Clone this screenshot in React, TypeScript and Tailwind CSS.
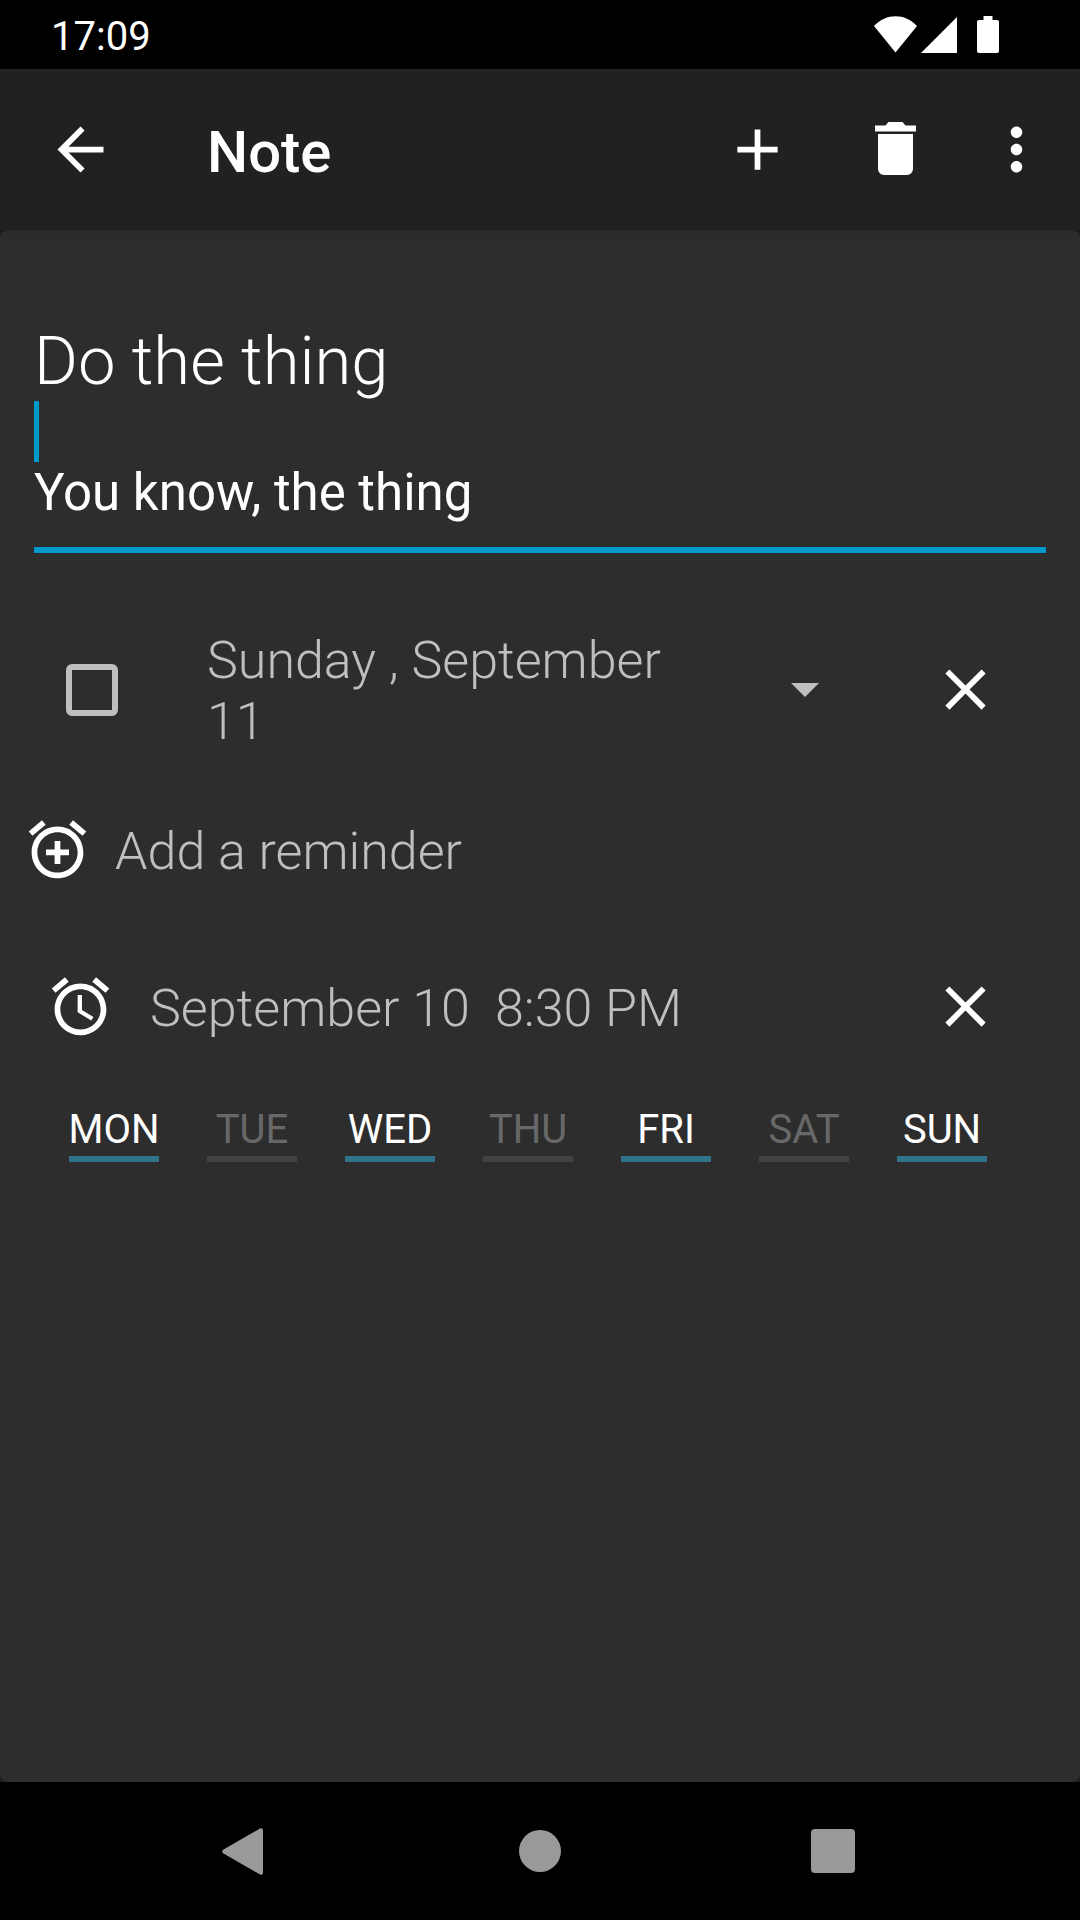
import React, { useState } from "react";

type Day = { label: string; name: string; on: boolean };

const DAYS: Day[] = [
  { label: "MON", name: "Monday", on: true },
  { label: "TUE", name: "Tuesday", on: false },
  { label: "WED", name: "Wednesday", on: true },
  { label: "THU", name: "Thursday", on: false },
  { label: "FRI", name: "Friday", on: true },
  { label: "SAT", name: "Saturday", on: false },
  { label: "SUN", name: "Sunday", on: true },
];

const DATES = ["Sunday , September 11", "Monday , September 12", "Tuesday , September 13"];

function Icon({ d, className = "size-[69px]" }: { d: string; className?: string }) {
  return (
    <svg viewBox="0 0 24 24" fill="currentColor" aria-hidden="true" className={className}>
      <path d={d} />
    </svg>
  );
}

const CLOSE =
  "M19 6.41 17.59 5 12 10.59 6.41 5 5 6.41 10.59 12 5 17.59 6.41 19 12 13.41 17.59 19 19 17.59 13.41 12z";
const BACK = "M20 11H7.83l5.59-5.59L12 4l-8 8 8 8 1.41-1.41L7.83 13H20v-2z";
const ADD = "M19 13h-6v6h-2v-6H5v-2h6V5h2v6h6v2z";
const ALARM =
  "M22 5.72l-4.6-3.86-1.29 1.53 4.6 3.86L22 5.72zM7.88 3.39L6.6 1.86 2 5.71l1.29 1.53 4.59-3.85zM12.5 8H11v6l4.75 2.85.75-1.23-4-2.37V8zM12 4c-4.97 0-9 4.03-9 9s4.02 9 9 9c4.97 0 9-4.03 9-9s-4.03-9-9-9zm0 16c-3.87 0-7-3.13-7-7s3.13-7 7-7 7 3.13 7 7-3.13 7-7 7z";
const ADD_ALARM =
  "M7.88 3.39L6.6 1.86 2 5.71l1.29 1.53 4.59-3.85zM22 5.72l-4.6-3.86-1.29 1.53 4.6 3.86L22 5.72zM12 4c-4.97 0-9 4.03-9 9s4.02 9 9 9c4.97 0 9-4.03 9-9s-4.03-9-9-9zm0 16c-3.87 0-7-3.13-7-7s3.13-7 7-7 7 3.13 7 7-3.13 7-7 7zm1-11h-2v3H8v2h3v3h2v-3h3v-2h-3V9z";

function StatusBar() {
  return (
    <header className="flex h-[69px] items-center bg-black pr-[81px] pl-[51px]">
      <time className="flex-1 pt-1 text-[40px] leading-[47px]">17:09</time>
      <svg viewBox="0 0 43 37" fill="currentColor" aria-hidden="true" className="mr-1 h-[37px] w-[43px]">
        <path d="M0 10C12 -3 31 -3 43 10L21.500 36.500Z" />
      </svg>
      <svg viewBox="0 0 36 37" fill="currentColor" aria-hidden="true" className="mr-5 h-[37px] w-9">
        <path d="M36 1v36H0Z" />
      </svg>
      <svg viewBox="0 0 22 37" fill="currentColor" aria-hidden="true" className="h-[37px] w-[22px]">
        <path d="M6.500 0h9v4H20a2 2 0 0 1 2 2v29a2 2 0 0 1-2 2H2a2 2 0 0 1-2-2V6a2 2 0 0 1 2-2h4.500Z" />
      </svg>
    </header>
  );
}

function Toolbar() {
  return (
    <div className="flex h-[161px] items-center bg-[#212121] pr-3">
      <button type="button" aria-label="Back" className="flex size-[161px] items-center justify-center">
        <Icon d={BACK} />
      </button>
      <h1 className="ml-[46px] flex-1 pt-1 text-[58px] leading-[68px] font-medium">Note</h1>
      <button type="button" aria-label="Add" className="flex size-[138px] items-center justify-center">
        <Icon d={ADD} />
      </button>
      <button type="button" aria-label="Delete" className="flex size-[138px] items-center justify-center">
        <svg viewBox="0 0 41 53" fill="currentColor" aria-hidden="true" className="mb-0.5 h-[53px] w-[41px]">
          <path d="M0 3.500h10.500L13.500 0h14l3 3.500H41V9.500H0ZM3 12h35v35a6 6 0 0 1-6 6H9a6 6 0 0 1-6-6Z" />
        </svg>
      </button>
      <button type="button" aria-label="More options" className="flex h-[138px] w-[104px] items-center justify-center">
        <Icon d="M12 8c1.100 0 2-.9 2-2s-.9-2-2-2-2 .9-2 2 .9 2 2 2zm0 2c-1.100 0-2 .9-2 2s.9 2 2 2 2-.9 2-2-.9-2-2-2zm0 6c-1.100 0-2 .9-2 2s.9 2 2 2 2-.9 2-2-.9-2-2-2z" />
      </button>
    </div>
  );
}

function DayToggle({ day }: { day: Day }) {
  const [on, setOn] = useState(day.on);
  return (
    <button
      type="button"
      aria-pressed={on}
      aria-label={day.name}
      onClick={() => setOn(!on)}
      className={
        on
          ? "flex w-[138px] flex-col items-center text-[40px] leading-[47px] text-white"
          : "flex w-[138px] flex-col items-center text-[40px] leading-[47px] text-[#686868]"
      }
    >
      {day.label}
      <span className={on ? "mt-[3px] h-1.5 w-[90px] bg-[#31718a]" : "mt-[3px] h-1.5 w-[90px] bg-[#424242]"} />
    </button>
  );
}

function Editor() {
  const [date, setDate] = useState(DATES[0]);
  return (
    <div className="flex flex-1 flex-col bg-[#1b1b1b]">
      <main className="flex flex-1 flex-col rounded-lg bg-[#2d2d2d]">
        <div className="h-3 rounded-t-lg bg-linear-to-b from-[#292929] to-[#2d2d2d]" />
        <div className="px-[34px] pt-20">
          <input
            type="text"
            aria-label="Title"
            defaultValue="Do the thing"
            className="block h-[79px] w-full bg-transparent text-[67px] leading-[79px] font-light outline-none"
          />
          <div className="relative border-b-[6px] border-[#0099cc] pb-6">
            <textarea
              aria-label="Note text"
              rows={2}
              defaultValue={"\nYou know, the thing"}
              className="block w-full resize-none overflow-hidden bg-transparent text-[51px] leading-[61px] caret-[#0099cc] outline-none"
            />
            <span className="absolute top-0 left-0 h-[61px] w-[5px] bg-[#0099cc]" />
          </div>
        </div>

        <div className="mt-[74px] flex items-center pr-[46px] pl-[66px] text-[52px] leading-[61px] font-light text-[#bfbfbf]">
          <input
            type="checkbox"
            aria-label="Done"
            className="size-[52px] shrink-0 appearance-none rounded-md border-[6px] border-[#bfbfbf] checked:bg-[#0099cc]"
          />
          <div className="relative ml-[89px] flex flex-1 items-center">
            <span className="flex-1 pt-[3px] pr-[90px]">{date}</span>
            <svg viewBox="0 0 28 14" fill="currentColor" aria-hidden="true" className="mr-[77px] h-3.5 w-7">
              <path d="M0 0h28L14 14Z" />
            </svg>
            <select
              aria-label="Date"
              value={date}
              onChange={(e) => setDate(e.target.value)}
              className="absolute inset-0 size-full opacity-0"
            >
              {DATES.map((d) => (
                <option key={d}>{d}</option>
              ))}
            </select>
          </div>
          <button type="button" aria-label="Remove date" className="flex w-[138px] justify-center text-white">
            <Icon d={CLOSE} />
          </button>
        </div>

        <button
          type="button"
          className="mt-[63px] flex items-center gap-[23px] pl-[23px] text-left text-[52px] leading-[61px] font-light text-[#bfbfbf]"
        >
          <Icon d={ADD_ALARM} className="size-[69px] text-white" />
          <span className="pt-1">Add a reminder</span>
        </button>

        <div className="mt-[88px] flex items-center gap-[35px] pr-[46px] pl-[46px] text-[52px] leading-[61px] font-light text-[#bfbfbf]">
          <Icon d={ALARM} className="size-[69px] text-white" />
          <div className="flex flex-1 gap-[25px] pt-[3px] whitespace-nowrap">
            <button type="button">September 10</button>
            <button type="button">8:30 PM</button>
          </div>
          <button type="button" aria-label="Remove reminder" className="flex w-[138px] justify-center text-white">
            <Icon d={CLOSE} />
          </button>
        </div>

        <div className="mt-[65px] flex px-[45px]">
          {DAYS.map((day) => (
            <DayToggle key={day.label} day={day} />
          ))}
        </div>
      </main>
    </div>
  );
}

function NavigationBar() {
  return (
    <nav className="flex h-[138px] items-center bg-black px-[100px] text-[#999999]">
      <button type="button" aria-label="Back" className="flex h-full flex-1 items-center justify-center">
        <svg viewBox="0 0 41 47" fill="currentColor" aria-hidden="true" className="mr-2 h-[47px] w-[41px]">
          <path d="M38 .5C39.500 -.3 41 .6 41 2.500V44.500C41 46.400 39.500 47.300 38 46.500L1.500 25.500C-.3 24.400 -.3 22.600 1.500 21.500Z" />
        </svg>
      </button>
      <button type="button" aria-label="Home" className="flex h-full flex-1 items-center justify-center">
        <span className="size-[42px] rounded-full bg-[#999999]" />
      </button>
      <button type="button" aria-label="Recent apps" className="flex h-full flex-1 items-center justify-center">
        <span className="size-11 rounded bg-[#999999]" />
      </button>
    </nav>
  );
}

export default function App() {
  return (
    <div className="flex min-h-screen flex-col bg-black font-['Roboto',sans-serif] text-white">
      <StatusBar />
      <Toolbar />
      <Editor />
      <NavigationBar />
    </div>
  );
}
